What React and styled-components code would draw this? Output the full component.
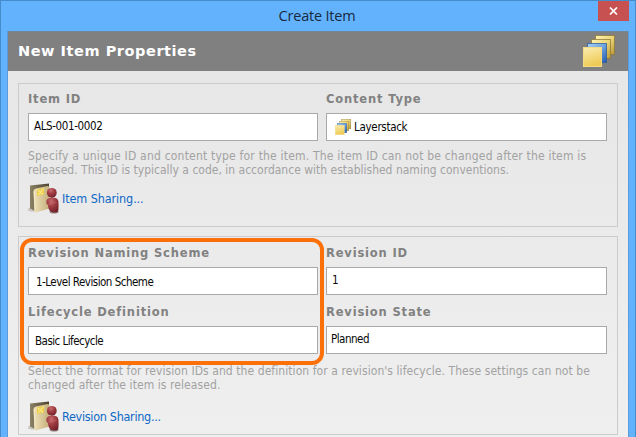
import React from 'react';
import styled, { createGlobalStyle } from 'styled-components';

const GlobalStyle = createGlobalStyle`
  * { box-sizing: border-box; }
  body { margin: 0; overflow: hidden; background: #62b2fd; }
`;

const Window = styled.div`
  width: 636px;
  height: 437px;
  overflow: hidden;
  background: #62b2fd;
  border: 1px solid #448cca;
  border-bottom: 0;
  font: 12px/14px "DejaVu Sans Condensed", "DejaVu Sans", sans-serif;
  font-stretch: condensed;
`;

const TitleBar = styled.header`
  height: 30px;
  display: grid;
  grid-template-columns: 1fr 31px;
  padding-right: 6px;
  padding-left: 35px;
`;

const WindowTitle = styled.div`
  font: 14.5px/30px "Open Sans", "Noto Sans", sans-serif;
  letter-spacing: -0.2px;
  color: #18293d;
  text-align: center;
  white-space: nowrap;
`;

const CloseButton = styled.button`
  width: 31px;
  height: 20px;
  padding: 0;
  border: 0;
  background: #c75050;
  display: flex;
  align-items: center;
  justify-content: center;
`;

const Client = styled.main`
  height: 406px;
  margin: 0 6px 0 6px;
  border: solid #5a9bd8;
  border-width: 0 1px;
  background: linear-gradient(#e6e6e6, #efefef);
`;

const Banner = styled.div`
  height: 40px;
  padding: 0 13px 2px 10px;
  display: flex;
  align-items: center;
  justify-content: space-between;
  background: #808080;
  border-top: 1px solid #748796;
`;

const BannerTitle = styled.h1`
  margin: 0;
  font: bold 14.5px/36px "DejaVu Sans", sans-serif;
  font-stretch: normal;
  letter-spacing: 0.55px;
  color: #fff;
  white-space: nowrap;
`;

const Group = styled.section`
  width: 600px;
  height: ${(p) => p.$height}px;
  margin: ${(p) => p.$gap}px 0 0 10px;
  padding: ${(p) => p.$top}px 10px 0 9px;
  border: 1px solid #cbcbcb;
`;

const Fields = styled.div`
  display: grid;
  grid-template-columns: 290px 281px;
  column-gap: 8px;
  row-gap: 11px;
`;

const Field = styled.div`
  height: 48px;
`;

const Label = styled.label`
  display: block;
  height: 20px;
  font: bold 11.5px/13px "DejaVu Sans", sans-serif;
  font-stretch: normal;
  letter-spacing: 0.83px;
  color: #818181;
  white-space: nowrap;
`;

const ValueBox = styled.div`
  height: 28px;
  display: flex;
  gap: 3px;
  padding: ${(p) => p.$top}px 0 0 ${(p) => p.$left}px;
  border: 1px solid #a9a9a9;
  background: #fff;
  color: #080808;
  font-size: 11.5px;
  letter-spacing: ${(p) => p.$spacing}px;
  white-space: nowrap;

  svg { margin-top: -1px; }
`;

const Hint = styled.p`
  margin: ${(p) => p.$top}px 0 0;
  color: #a2a2a2;
`;

const HintLine = styled.span`
  display: block;
  white-space: nowrap;
  letter-spacing: ${(p) => p.$spacing}px;
`;

const ShareRow = styled.div`
  height: 32px;
  margin-top: ${(p) => p.$top}px;
  display: flex;
  align-items: center;
  gap: 2px;
`;

const ShareLink = styled.a`
  padding-top: 2px;
  color: #0d68c6;
  font-size: 12.5px;
  line-height: 16px;
  letter-spacing: ${(p) => p.$spacing}px;
  white-space: nowrap;
`;

const Highlight = styled.div`
  position: absolute;
  left: 20px;
  top: 238px;
  width: 304px;
  height: 127px;
  border: 4px solid #fb7008;
  border-radius: 12px;
`;

function StackIcon({ size, id }) {
  const sheets = [
    [12.5, 0.5, 'y'],
    [8.5, 4.5, 'y'],
    [4.5, 8.5, 'b'],
    [0.5, 12.5, 'f'],
  ];
  return (
    <svg width={size} height={size} viewBox="0 0 32 32">
      <defs>
        <linearGradient id={`${id}y`} x1="0" y1="0" x2="1" y2="1">
          <stop offset="0" stopColor="#fff2b0" />
          <stop offset="0.5" stopColor="#ecd679" />
          <stop offset="1" stopColor="#b99835" />
        </linearGradient>
        <linearGradient id={`${id}b`} x1="0" y1="0" x2="1" y2="1">
          <stop offset="0" stopColor="#a5d0f5" />
          <stop offset="0.5" stopColor="#6da4de" />
          <stop offset="1" stopColor="#2359ae" />
        </linearGradient>
        <linearGradient id={`${id}f`} x1="0" y1="0" x2="0.3" y2="1">
          <stop offset="0" stopColor="#fbecb1" />
          <stop offset="1" stopColor="#eecb55" />
        </linearGradient>
      </defs>
      {sheets.map(([x, y, tone]) => (
        <rect
          key={x}
          x={x}
          y={y}
          width={tone === 'f' ? 18 : 19}
          height="19"
          fill={`url(#${id}${tone})`}
          stroke={tone === 'b' ? '#2c5c9e' : tone === 'f' ? '#f5dc84' : '#8e7536'}
          strokeOpacity={tone === 'f' ? 1 : 0.75}
        />
      ))}
    </svg>
  );
}

function ShareIcon({ id }) {
  return (
    <svg width="32" height="32" viewBox="0 0 32 32">
      <defs>
        <linearGradient id={`${id}p`}>
          <stop offset="0" stopColor="#efe2b9" />
          <stop offset="1" stopColor="#c4ae7a" />
        </linearGradient>
        <linearGradient id={`${id}d`}>
          <stop offset="0" stopColor="#8b8266" />
          <stop offset="1" stopColor="#4d4230" />
        </linearGradient>
        <radialGradient id={`${id}r`} cx="0.4" cy="0.25" r="0.8">
          <stop offset="0" stopColor="#c96c6e" />
          <stop offset="0.45" stopColor="#a03c42" />
          <stop offset="1" stopColor="#702027" />
        </radialGradient>
      </defs>
      <ellipse cx="5" cy="27.5" rx="5.5" ry="2.2" fill="#bdb9b1" opacity="0.7" />
      <ellipse cx="26" cy="29.5" rx="4.5" ry="2" fill="#6f5a59" opacity="0.7" />
      <path d="M2 3.5 21 1.5V24L7 29 2 26.5Z" fill={`url(#${id}d)`} />
      <path d="M5.5 9Q5.5 7 8 6.5L19.5 4Q21.5 4 21.5 6V26.5L7.5 30.5 6.5 29.5Z" fill={`url(#${id}p)`} />
      <path d="M6.2 9.5 7 29" stroke="#f8edcc" strokeWidth="0.8" fill="none" />
      <path d="M9 7.3 16 5.9V12.5L9 13.9Z" fill="#edcf4e" />
      <path d="M9.5 7.9 12.8 10.2 15.5 6.7M10 12.7 12.2 10.7 15 12" stroke="#fff0a0" fill="none" />
      <path
        d="M18.3 19Q19 15.4 24.5 15.4 30 15.4 30.4 19.5L30.6 24Q30.8 28.5 29.5 30 25 31.5 22 29L20.5 26.5 20 23Q18 22 18.3 19Z"
        fill={`url(#${id}r)`}
      />
      <path d="M20.5 22.5 28.5 20" stroke="#c97577" fill="none" opacity="0.5" />
      <circle cx="23.8" cy="10.8" r="4.9" fill={`url(#${id}r)`} />
    </svg>
  );
}

function FieldItem({ label, value, top, left, valueSpacing, icon }) {
  return (
    <Field>
      <Label>{label}</Label>
      <ValueBox $top={top} $left={left} $spacing={valueSpacing}>
        {icon}
        <span>{value}</span>
      </ValueBox>
    </Field>
  );
}

export default function App() {
  return (
    <>
      <GlobalStyle />
      <Window>
        <TitleBar>
          <WindowTitle>Create Item</WindowTitle>
          <CloseButton aria-label="Close">
            <svg width="9" height="8" viewBox="0 0 9 8">
              <path d="M1 .5 8 7.5M8 .5 1 7.5" stroke="#fff" strokeWidth="1.7" />
            </svg>
          </CloseButton>
        </TitleBar>
        <Client>
          <Banner>
            <BannerTitle>New Item Properties</BannerTitle>
            <StackIcon size={32} id="banner" />
          </Banner>
          <Group $height={144} $gap={12} $top={9}>
            <Fields>
              <FieldItem label="Item ID" value="ALS-001-0002" top={5} left={5} valueSpacing={-0.38} />
              <FieldItem
                label="Content Type"
                value="Layerstack"
                top={6}
                left={8}
                valueSpacing={-0.3}
                icon={<StackIcon size={16} id="type" />}
              />
            </Fields>
            <Hint $top={8}>
              <HintLine $spacing={0.2}>
                Specify a unique ID and content type for the item. The item ID can not be changed after the item is
              </HintLine>
              <HintLine $spacing={0}>
                released. This ID is typically a code, in accordance with established naming conventions.
              </HintLine>
            </Hint>
            <ShareRow $top={5}>
              <ShareIcon id="item" />
              <ShareLink $spacing={-0.1}>Item Sharing...</ShareLink>
            </ShareRow>
          </Group>
          <Group $height={199} $gap={9} $top={10}>
            <Fields>
              <FieldItem label="Revision Naming Scheme" value="1-Level Revision Scheme" top={7} left={7} valueSpacing={-0.51} />
              <FieldItem label="Revision ID" value="1" top={5} left={5} valueSpacing={0} />
              <FieldItem label="Lifecycle Definition" value="Basic Lifecycle" top={7} left={6} valueSpacing={-0.53} />
              <FieldItem label="Revision State" value="Planned" top={5} left={4} valueSpacing={-0.5} />
            </Fields>
            <Hint $top={10}>
              <HintLine $spacing={0.07}>
                Select the format for revision IDs and the definition for a revision's lifecycle. These settings can not be
              </HintLine>
              <HintLine $spacing={0.08}>changed after the item is released.</HintLine>
            </Hint>
            <ShareRow $top={8}>
              <ShareIcon id="revision" />
              <ShareLink $spacing={-0.3}>Revision Sharing...</ShareLink>
            </ShareRow>
          </Group>
        </Client>
        <Highlight />
      </Window>
    </>
  );
}
